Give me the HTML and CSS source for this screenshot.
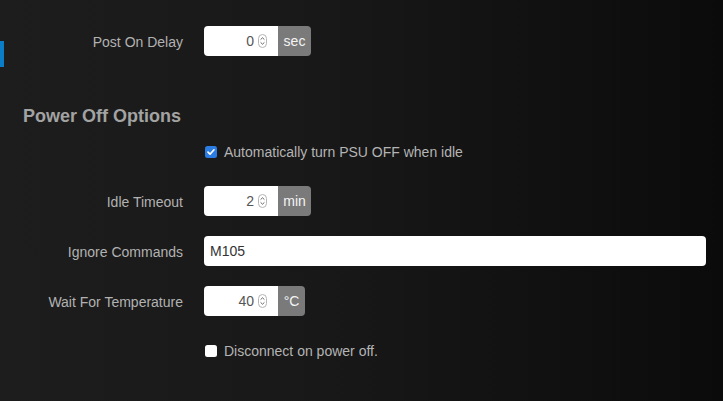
FILE: index.html
```html
<!DOCTYPE html>
<html>
<head>
<meta charset="utf-8">
<link rel="stylesheet" href="styles.css">
</head>
<body>
<div class="page">
  <div class="rail"><div class="rail-marker"></div></div>
  <form class="form">
    <div class="row row-first">
      <label class="label">Post On Delay</label>
      <div class="controls">
        <div class="group">
          <div class="num"><span class="val">0</span><svg class="spin" width="9" height="14" viewBox="0 0 9 14"><rect x="0.5" y="0.5" width="8" height="13" rx="4" fill="#fff" stroke="#b5b5b5"/><path d="M2.6 5.6 L4.5 3.8 L6.4 5.6 M2.6 8.4 L4.5 10.2 L6.4 8.4" fill="none" stroke="#555" stroke-width="0.9"/></svg></div>
          <span class="addon">sec</span>
        </div>
      </div>
    </div>

    <h3 class="legend">Power Off Options</h3>

    <div class="row row-check">
      <div class="controls">
        <label class="check"><span class="box box-on"><svg width="12" height="12" viewBox="0 0 12 12"><path d="M3 6.2 L5 8.2 L9 3.8" fill="none" stroke="#fff" stroke-width="1.7" stroke-linecap="round" stroke-linejoin="round"/></svg></span>Automatically turn PSU OFF when idle</label>
      </div>
    </div>

    <div class="row">
      <label class="label">Idle Timeout</label>
      <div class="controls">
        <div class="group">
          <div class="num"><span class="val">2</span><svg class="spin" width="9" height="14" viewBox="0 0 9 14"><rect x="0.5" y="0.5" width="8" height="13" rx="4" fill="#fff" stroke="#b5b5b5"/><path d="M2.6 5.6 L4.5 3.8 L6.4 5.6 M2.6 8.4 L4.5 10.2 L6.4 8.4" fill="none" stroke="#555" stroke-width="0.9"/></svg></div>
          <span class="addon">min</span>
        </div>
      </div>
    </div>

    <div class="row">
      <label class="label">Ignore Commands</label>
      <div class="controls controls-wide">
        <div class="text">M105</div>
      </div>
    </div>

    <div class="row">
      <label class="label">Wait For Temperature</label>
      <div class="controls">
        <div class="group">
          <div class="num"><span class="val">40</span><svg class="spin" width="9" height="14" viewBox="0 0 9 14"><rect x="0.5" y="0.5" width="8" height="13" rx="4" fill="#fff" stroke="#b5b5b5"/><path d="M2.6 5.6 L4.5 3.8 L6.4 5.6 M2.6 8.4 L4.5 10.2 L6.4 8.4" fill="none" stroke="#555" stroke-width="0.9"/></svg></div>
          <span class="addon addon-deg">°C</span>
        </div>
      </div>
    </div>

    <div class="row row-check2">
      <div class="controls">
        <label class="check"><span class="box"></span>Disconnect on power off.</label>
      </div>
    </div>
  </form>
</div>
</body>
</html>
```

FILE: styles.css
```css
html, body {
  margin: 0;
  height: 100%;
}
body {
  background: linear-gradient(to right, #1d1d1d 0%, #181818 45%, #0b0b0b 100%);
  font-family: "Liberation Sans", Arial, Helvetica, sans-serif;
  font-size: 14px;
  color: #b0b0b0;
  overflow: hidden;
}
.page {
  display: flex;
  height: 100%;
}
.rail {
  width: 4px;
  flex: none;
  padding-top: 41px;
}
.rail-marker {
  width: 4px;
  height: 26px;
  background: #0b7dc6;
}
.form {
  flex: 1;
  padding: 26px 17px 0 19px;
  display: flex;
  flex-direction: column;
  margin: 0;
}
.row {
  display: flex;
  align-items: center;
  height: 30px;
  margin-bottom: 20px;
}
.row-first {
  margin-bottom: 50px;
}
.label {
  width: 160px;
  flex: none;
  text-align: right;
  color: #b2b2b2;
  padding-top: 1px;
}
.controls {
  margin-left: 21px;
  display: flex;
  align-items: center;
}
.row-check .controls,
.row-check2 .controls {
  margin-left: 181px;
}
.controls-wide {
  flex: 1;
}
.legend {
  margin: 0 0 16px 0;
  font-size: 18px;
  line-height: 20px;
  font-weight: bold;
  color: #a3a3a3;
}
.row-check {
  height: 20px;
  margin-bottom: 24px;
}
.row-check2 {
  height: 20px;
  margin-top: 5px;
}
.check {
  display: flex;
  align-items: center;
  color: #b4b4b4;
}
.box {
  width: 12px;
  height: 12px;
  border-radius: 2.5px;
  background: #fff;
  margin: 0 7px 0 1px;
  display: flex;
  flex: none;
}
.box-on {
  background: #2b7de3;
}
.group {
  display: flex;
  height: 30px;
}
.num {
  width: 74px;
  box-sizing: border-box;
  background: #fff;
  border-radius: 4px 0 0 4px;
  display: flex;
  align-items: center;
  justify-content: flex-end;
  padding-right: 11px;
  color: #555;
}
.val {
  margin-right: 4px;
}
.spin {
  display: block;
}
.addon {
  background: #7a7a7a;
  color: #f4f4f4;
  border-radius: 0 4px 4px 0;
  width: 33px;
  display: flex;
  align-items: center;
  justify-content: center;
  padding-bottom: 1px;
  box-sizing: border-box;
}
.addon-deg {
  width: 27px;
}
.text {
  flex: 1;
  height: 30px;
  background: #fff;
  border-radius: 4px;
  color: #333;
  display: flex;
  align-items: center;
  padding-left: 6px;
}
```
